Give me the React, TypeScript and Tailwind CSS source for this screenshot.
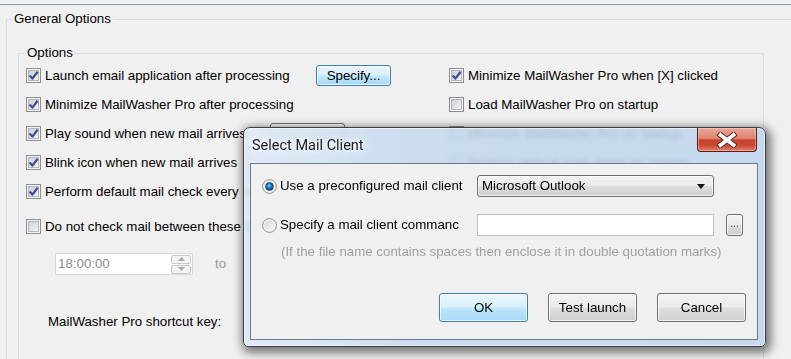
import { useId } from 'react';

// Win7 style checkbox glyph
function CheckBox({ checked = false }: { checked?: boolean }) {
  const id = useId();
  return (
    <svg width="15" height="15" viewBox="0 0 15 15" className="shrink-0">
      <defs>
        <linearGradient id={id} x1="0" y1="0" x2="1" y2="1">
          <stop offset="0" stopColor="#c9cdd3" />
          <stop offset="1" stopColor="#f7f7f7" />
        </linearGradient>
      </defs>
      <rect x="0.5" y="0.5" width="14" height="14" fill="#f4f4f4" stroke="#8e8f8f" />
      <rect x="2.5" y="2.5" width="10" height="10" fill={`url(#${id})`} stroke="#b4b8be" />
      {checked && (
        <path d="M3.6 7.4 L6.4 10.6 L11.6 3.8" fill="none" stroke="#3d5192" strokeWidth="2.3" strokeLinejoin="round" />
      )}
    </svg>
  );
}

// Win7 style radio glyph
function Radio({ checked = false }: { checked?: boolean }) {
  const id = useId();
  return (
    <svg width="15" height="15" viewBox="0 0 15 15" className="shrink-0">
      <defs>
        <linearGradient id={`${id}o`} x1="0" y1="0" x2="1" y2="1">
          <stop offset="0" stopColor="#d2d4d8" />
          <stop offset="1" stopColor="#fbfbfb" />
        </linearGradient>
        <radialGradient id={`${id}d`} cx="0.45" cy="0.4" r="0.6">
          <stop offset="0" stopColor="#9fe5ff" />
          <stop offset="0.35" stopColor="#2a8ad4" />
          <stop offset="0.85" stopColor="#0d4a8c" />
          <stop offset="1" stopColor="#0b3c72" />
        </radialGradient>
      </defs>
      <circle cx="7.5" cy="7.5" r="6.9" fill="#f4f4f4" stroke="#8e8f8f" strokeWidth="1" />
      <circle cx="7.5" cy="7.5" r="5" fill={`url(#${id}o)`} />
      {checked && <circle cx="7.5" cy="7.5" r="3.9" fill={`url(#${id}d)`} stroke="#0b3564" strokeWidth="0.6" />}
    </svg>
  );
}

function Button({ label, blue = false, className = '' }: { label: string; blue?: boolean; className?: string }) {
  return (
    <div
      className={`flex shrink-0 items-center justify-center rounded-[3px] border shadow-[inset_0_0_0_1px_rgba(255,255,255,0.75)] ${
        blue
          ? 'border-[#3c7fb1] bg-[linear-gradient(#eaf6fd_0%,#d9f0fc_48%,#bee6fd_52%,#a7d9f5_100%)]'
          : 'border-[#707070] bg-[linear-gradient(#f2f2f2_0%,#ebebeb_48%,#dddddd_52%,#cfcfcf_100%)]'
      } ${className}`}
    >
      {label}
    </div>
  );
}

function CheckRow({ label, checked = false, children }: { label: string; checked?: boolean; children?: React.ReactNode }) {
  return (
    <div className="flex h-[29px] items-center gap-[4px] whitespace-nowrap">
      <CheckBox checked={checked} />
      {children ?? <span>{label}</span>}
    </div>
  );
}

function SpinEdit({ value }: { value: string }) {
  return (
    <div className="flex h-[22px] w-[138px] shrink-0 items-center justify-between border border-[#d6d8dc] bg-white pl-[2px] pr-[1px] text-[#8c8c8c]">
      <span>{value}</span>
      <div className="flex flex-col gap-px">
        <div className="flex h-[9px] w-[20px] items-center justify-center rounded-[2px] border border-[#c9c9c9] bg-[#f3f3f3]">
          <svg width="7" height="4" viewBox="0 0 7 4"><path d="M0 4 L3.5 0 L7 4Z" fill="#a8a8a8" /></svg>
        </div>
        <div className="flex h-[9px] w-[20px] items-center justify-center rounded-[2px] border border-[#c9c9c9] bg-[#f3f3f3]">
          <svg width="7" height="4" viewBox="0 0 7 4"><path d="M0 0 L3.5 4 L7 0Z" fill="#a8a8a8" /></svg>
        </div>
      </div>
    </div>
  );
}

function SelectMailClient() {
  return (
    <div className="absolute left-[243px] top-[127px] flex h-[220px] w-[523px] flex-col overflow-hidden rounded-t-[7px] rounded-b-[5px] border border-[#3b3f45] bg-[linear-gradient(90deg,rgba(222,233,246,0.9)_0%,rgba(196,216,238,0.86)_35%,rgba(192,213,237,0.86)_100%)] shadow-[2px_3px_10px_3px_rgba(0,0,0,0.5),inset_0_0_0_1px_rgba(255,255,255,0.55)] backdrop-blur-[2.5px]">
      {/* title bar */}
      <div className="flex h-[35px] shrink-0 items-start justify-between">
        <span className="mt-[9px] pl-[8px] font-['Roboto','Liberation_Sans',sans-serif] text-[14.5px] leading-[18px] text-[#1a1a1a] [text-shadow:0_0_8px_#fff,0_0_4px_#fff]">
          Select Mail Client
        </span>
        <div className="mr-[8px] flex h-[24px] w-[60px] items-center justify-center rounded-b-[4px] border border-t-0 border-[#5a1b10] bg-[linear-gradient(#eaa697_0%,#df8472_45%,#c8442c_52%,#c9482f_75%,#e2826e_100%)] shadow-[inset_0_0_0_1px_rgba(255,220,210,0.45)]">
          <svg width="22" height="16" viewBox="0 0 22 16">
            <path d="M4.5 3 L17.5 13 M17.5 3 L4.5 13" stroke="#5c3028" strokeWidth="5.8" strokeLinecap="square" />
            <path d="M4.5 3 L17.5 13 M17.5 3 L4.5 13" stroke="#fafafa" strokeWidth="3.8" strokeLinecap="square" />
          </svg>
        </div>
      </div>
      {/* client area */}
      <div className="ml-[6px] mr-[7px] flex h-[177px] flex-col border border-[#6a7a8e] bg-[#f0f0f0] px-[11px] pb-[17px] pt-[11px]">
        <div className="flex h-[22px] items-center">
          <div className="flex w-[215px] items-center gap-[3px] whitespace-nowrap">
            <Radio checked />
            <span>Use a preconfigured mail client</span>
          </div>
          <div className="flex h-[22px] w-[237px] items-center justify-between rounded-[3px] border border-[#707070] bg-[linear-gradient(#f2f2f2_0%,#ebebeb_48%,#dddddd_52%,#cfcfcf_100%)] pl-[4px] pr-[8px] shadow-[inset_0_0_0_1px_rgba(255,255,255,0.75)]">
            <span>Microsoft Outlook</span>
            <svg width="8" height="5" viewBox="0 0 8 5"><path d="M0 0 L8 0 L4 5Z" fill="#111" /></svg>
          </div>
        </div>
        <div className="mt-[17px] flex h-[22px] items-center">
          <div className="flex w-[215px] items-center gap-[3px] whitespace-nowrap">
            <Radio />
            <span>Specify a mail client commanc</span>
          </div>
          <div className="h-[22px] w-[237px] border border-[#bdc0c6] bg-white" />
          <Button label="..." className="ml-[12px] h-[22px] w-[17px] pb-[3px] text-[10px] text-[#555]" />
        </div>
        <div className="mt-[8px] whitespace-nowrap pl-[19px] leading-[16px] text-[#a0a0a0]">
          (If the file name contains spaces then enclose it in double quotation marks)
        </div>
        <div className="mt-auto flex justify-end gap-[20px]">
          <Button label="OK" blue className="h-[29px] w-[89px]" />
          <Button label="Test launch" className="h-[29px] w-[89px]" />
          <Button label="Cancel" className="h-[29px] w-[89px]" />
        </div>
      </div>
    </div>
  );
}

export default function App() {
  return (
    <div className="relative h-[359px] w-[791px] overflow-hidden bg-[#f0f0f0] font-['Liberation_Sans',Arial,sans-serif] text-[13.3px] leading-[16px] text-black">
      <div className="h-[4px]" />
      <div className="h-px bg-[#8d9ba6]" />

      <fieldset className="ml-[6px] mt-[6px] w-[820px] border border-[#d5dfe5] pb-[40px]">
        <legend className="ml-[5px] px-[2px] leading-[16px]">General Options</legend>

        <fieldset className="ml-[11px] mt-[18px] w-[746px] border border-[#d5dfe5] pb-[40px]">
          <legend className="ml-[6px] px-[2px] leading-[16px]">Options</legend>

          <div className="grid grid-cols-[423px_1fr] pl-[7px]">
            {/* left column */}
            <div className="flex flex-col">
              <CheckRow label="" checked>
                <span className="w-[267px]">Launch email application after processing</span>
                <Button label="Specify..." blue className="h-[21px] w-[75px]" />
              </CheckRow>
              <CheckRow label="Minimize MailWasher Pro after processing" checked />
              <CheckRow label="" checked>
                <span className="w-[221px]">Play sound when new mail arrives</span>
                <Button label="" className="h-[21px] w-[75px]" />
              </CheckRow>
              <CheckRow label="Blink icon when new mail arrives" checked />
              <CheckRow label="Perform default mail check every minutes" checked />
              <div className="mt-[6px]">
                <CheckRow label="Do not check mail between these times" />
              </div>
              <div className="ml-[29px] mt-[12px] flex items-center">
                <SpinEdit value="18:00:00" />
                <span className="ml-[22px] text-[#9a9a9a]">to</span>
                <div className="ml-[30px]">
                  <SpinEdit value="" />
                </div>
              </div>
              <div className="ml-[22px] mt-[39px] whitespace-nowrap">MailWasher Pro shortcut key:</div>
            </div>

            {/* right column */}
            <div className="flex flex-col">
              <CheckRow label="Minimize MailWasher Pro when [X] clicked" checked />
              <CheckRow label="Load MailWasher Pro on startup" />
              <CheckRow label="Minimize MailWasher Pro on startup" />
              <CheckRow label="Perform default mail check on startup" />
            </div>
          </div>
        </fieldset>
      </fieldset>

      <SelectMailClient />
    </div>
  );
}
